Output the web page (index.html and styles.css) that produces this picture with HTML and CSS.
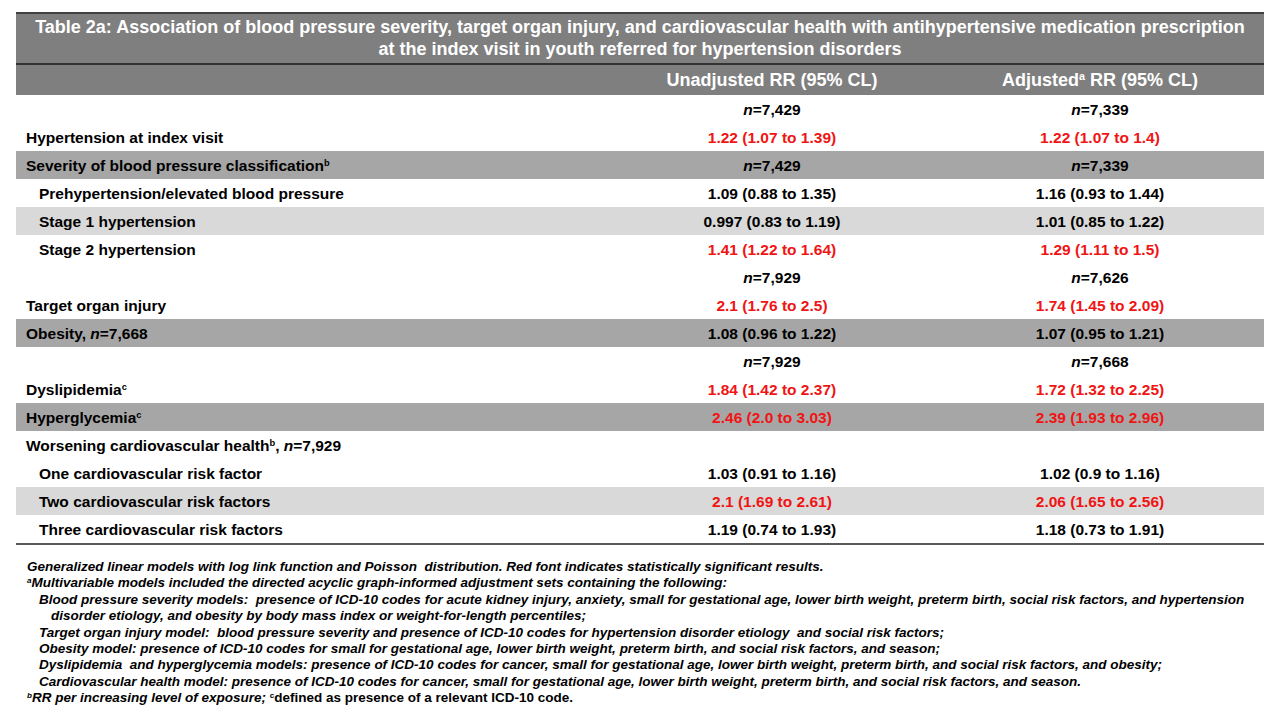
FILE: index.html
```html
<!DOCTYPE html>
<html lang="en">
<head>
<meta charset="utf-8">
<title>Table 2a</title>
<link rel="stylesheet" href="styles.css">
</head>
<body>
<div class="page">
  <div class="tbl">
    <div class="title">Table 2a: Association of blood pressure severity, target organ injury, and cardiovascular health with antihypertensive medication prescription<br>at the index visit in youth referred for hypertension disorders</div>
    <div class="row head">
      <div class="lab"></div>
      <div class="val">Unadjusted RR (95% CL)</div>
      <div class="val">Adjusted<sup>a</sup> RR (95% CL)</div>
    </div>
    <div class="row"><div class="lab"></div><div class="val"><i>n</i>=7,429</div><div class="val"><i>n</i>=7,339</div></div>
    <div class="row"><div class="lab">Hypertension at index visit</div><div class="val red">1.22 (1.07 to 1.39)</div><div class="val red">1.22 (1.07 to 1.4)</div></div>
    <div class="row dark"><div class="lab">Severity of blood pressure classification<sup>b</sup></div><div class="val"><i>n</i>=7,429</div><div class="val"><i>n</i>=7,339</div></div>
    <div class="row"><div class="lab sub">Prehypertension/elevated blood pressure</div><div class="val">1.09 (0.88 to 1.35)</div><div class="val">1.16 (0.93 to 1.44)</div></div>
    <div class="row light"><div class="lab sub">Stage 1 hypertension</div><div class="val">0.997 (0.83 to 1.19)</div><div class="val">1.01 (0.85 to 1.22)</div></div>
    <div class="row"><div class="lab sub">Stage 2 hypertension</div><div class="val red">1.41 (1.22 to 1.64)</div><div class="val red">1.29 (1.11 to 1.5)</div></div>
    <div class="row"><div class="lab"></div><div class="val"><i>n</i>=7,929</div><div class="val"><i>n</i>=7,626</div></div>
    <div class="row"><div class="lab">Target organ injury</div><div class="val red">2.1 (1.76 to 2.5)</div><div class="val red">1.74 (1.45 to 2.09)</div></div>
    <div class="row dark"><div class="lab">Obesity, <i>n</i>=7,668</div><div class="val">1.08 (0.96 to 1.22)</div><div class="val">1.07 (0.95 to 1.21)</div></div>
    <div class="row"><div class="lab"></div><div class="val"><i>n</i>=7,929</div><div class="val"><i>n</i>=7,668</div></div>
    <div class="row"><div class="lab">Dyslipidemia<sup>c</sup></div><div class="val red">1.84 (1.42 to 2.37)</div><div class="val red">1.72 (1.32 to 2.25)</div></div>
    <div class="row dark"><div class="lab">Hyperglycemia<sup>c</sup></div><div class="val red">2.46 (2.0 to 3.03)</div><div class="val red">2.39 (1.93 to 2.96)</div></div>
    <div class="row"><div class="lab">Worsening cardiovascular health<sup>b</sup>, <i>n</i>=7,929</div><div class="val"></div><div class="val"></div></div>
    <div class="row"><div class="lab sub">One cardiovascular risk factor</div><div class="val">1.03 (0.91 to 1.16)</div><div class="val">1.02 (0.9 to 1.16)</div></div>
    <div class="row light"><div class="lab sub">Two cardiovascular risk factors</div><div class="val red">2.1 (1.69 to 2.61)</div><div class="val red">2.06 (1.65 to 2.56)</div></div>
    <div class="row last"><div class="lab sub">Three cardiovascular risk factors</div><div class="val">1.19 (0.74 to 1.93)</div><div class="val">1.18 (0.73 to 1.91)</div></div>
  </div>
  <div class="notes">
    <div class="ln">Generalized linear models with log link function and Poisson&nbsp; distribution. Red font indicates statistically significant results.</div>
    <div class="ln"><sup>a</sup>Multivariable models included the directed acyclic graph-informed adjustment sets containing the following:</div>
    <div class="ln in1">Blood pressure severity models:&nbsp; presence of ICD-10 codes for acute kidney injury, anxiety, small for gestational age, lower birth weight, preterm birth, social risk factors, and hypertension</div>
    <div class="ln in2">disorder etiology, and obesity by body mass index or weight-for-length percentiles;</div>
    <div class="ln in1">Target organ injury model:&nbsp; blood pressure severity and presence of ICD-10 codes for hypertension disorder etiology&nbsp; and social risk factors;</div>
    <div class="ln in1">Obesity model: presence of ICD-10 codes for small for gestational age, lower birth weight, preterm birth, and social risk factors, and season;</div>
    <div class="ln in1">Dyslipidemia&nbsp; and hyperglycemia models: presence of ICD-10 codes for cancer, small for gestational age, lower birth weight, preterm birth, and social risk factors, and obesity;</div>
    <div class="ln in1">Cardiovascular health model: presence of ICD-10 codes for cancer, small for gestational age, lower birth weight, preterm birth, and social risk factors, and season.</div>
    <div class="ln"><sup>b</sup>RR per increasing level of exposure; <span class="up"><sup>c</sup>defined as presence of a relevant ICD-10 code.</span></div>
  </div>
</div>
</body>
</html>
```
FILE: styles.css
```css
html, body {
  margin: 0;
  padding: 0;
  background: #ffffff;
}
body {
  font-family: "Liberation Sans", Arial, sans-serif;
  color: #000;
  width: 1280px;
  height: 720px;
  overflow: hidden;
}
.page {
  padding: 12px 16px 0 16px;
}
.tbl {
  width: 1248px;
  border-bottom: 2px solid #595959;
}
.title {
  background: #7f7f7f;
  color: #fff;
  font-weight: bold;
  font-size: 18px;
  line-height: 22px;
  text-align: center;
  border-top: 2px solid #404040;
  border-bottom: 2px solid #333;
  padding: 2px 0 3px 0;
}
.row {
  display: grid;
  grid-template-columns: 592px 328px 328px;
  height: 28px;
  align-items: center;
  font-weight: bold;
  font-size: 15.5px;
  padding-top: 1px;
  box-sizing: border-box;
}
.row.head {
  height: 30px;
  background: #7f7f7f;
  color: #fff;
  font-size: 18px;
}
.row.dark { background: #a6a6a6; }
.row.light { background: #d9d9d9; }
.lab { padding-left: 10px; white-space: nowrap; }
.lab.sub { padding-left: 23px; }
.val { text-align: center; white-space: nowrap; }
.red { color: #f01414; }
sup {
  font-size: 0.6em;
  line-height: 0;
  vertical-align: 0.55em;
}
.notes {
  margin-top: 14px;
  font-size: 13.5px;
  line-height: 16.4px;
  font-weight: bold;
  font-style: italic;
}
.ln { white-space: nowrap; padding-left: 11px; }
.ln.in1 { padding-left: 23px; }
.ln.in2 { padding-left: 35px; }
.up { font-style: normal; }
```
